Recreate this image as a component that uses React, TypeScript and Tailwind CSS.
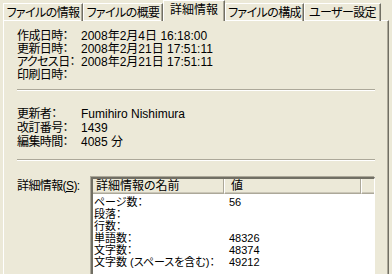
import React from 'react';

const tabs = [
  { label: 'ファイルの情報', w: 'w-[80px]' },
  { label: 'ファイルの概要', w: 'w-[80px]' },
  { label: '詳細情報', w: 'w-[62px]', active: true },
  { label: 'ファイルの構成', w: 'w-[79px]' },
  { label: 'ユーザー設定', w: 'w-[77px]' },
];

const dates = [
  ['作成日時：', '2008年2月4日 16:18:00'],
  ['更新日時：', '2008年2月21日 17:51:11'],
  ['アクセス日：', '2008年2月21日 17:51:11'],
  ['印刷日時：', ''],
];

const stats = [
  ['更新者：', 'Fumihiro Nishimura'],
  ['改訂番号：', '1439'],
  ['編集時間：', '4085 分'],
];

const details = [
  ['ページ数：', '56'],
  ['段落：', ''],
  ['行数：', ''],
  ['単語数：', '48326'],
  ['文字数：', '48374'],
  ['文字数 (スペースを含む)：', '49212'],
];

const Separator = () => (
  <div className="mx-[13px] h-[2px] border-t border-t-[#aca899] border-b border-b-white" />
);

const App = () => {
  return (
    <div className="w-[392px] h-[274px] overflow-hidden bg-[#ece9d8] text-black text-[12px] leading-[13px] font-['Liberation_Sans','Noto_Sans_CJK_JP',sans-serif] [font-feature-settings:'palt']">
      {/* tab strip */}
      <div className="flex items-end h-[21px] pl-[3px]">
        {tabs.map((t) =>
          t.active ? (
            <div
              key={t.label}
              className={`${t.w} relative z-10 h-[21px] flex items-center justify-center whitespace-nowrap bg-[#ece9d8] border-t border-l border-white border-r border-r-[#716f64] shadow-[inset_-1px_0_0_#aca899] pb-[2px]`}
            >
              {t.label}
            </div>
          ) : (
            <div
              key={t.label}
              className={`${t.w} h-[18px] flex items-center justify-center whitespace-nowrap tracking-[-0.6px] border-t border-l border-white border-r border-r-[#716f64] shadow-[inset_-1px_0_0_#aca899] pt-[1px]`}
            >
              {t.label}
            </div>
          )
        )}
      </div>

      {/* panel */}
      <div className="-mt-[1px] ml-[3px] w-[386px] h-[260px] border-t border-l border-white border-r border-r-[#716f64] shadow-[inset_-1px_0_0_#aca899] pt-[9px]">
        <div className="grid grid-cols-[64px_1fr] pl-[13px]">
          {dates.map(([k, v]) => (
            <React.Fragment key={k}>
              <div className="whitespace-nowrap tracking-[-0.6px]">{k}</div>
              <div className="whitespace-nowrap">{v}</div>
            </React.Fragment>
          ))}
        </div>

        <div className="mt-[7px]">
          <Separator />
        </div>

        <div className="grid grid-cols-[64px_1fr] pl-[13px] mt-[17px] gap-y-[1px]">
          {stats.map(([k, v]) => (
            <React.Fragment key={k}>
              <div className="whitespace-nowrap tracking-[-0.6px]">{k}</div>
              <div className="whitespace-nowrap">{v}</div>
            </React.Fragment>
          ))}
        </div>

        <div className="mt-[10px]">
          <Separator />
        </div>

        <div className="flex mt-[16px] pl-[13px]">
          <div className="w-[74px] pt-[3px] whitespace-nowrap tracking-[-0.6px]">
            詳細情報(<span className="underline">S</span>):
          </div>
          <div className="w-[284px] h-[120px] bg-white border-t-2 border-l-2 border-t-[#716f64] border-l-[#716f64] border-r border-b border-white shadow-[-1px_-1px_0_#aca899]">
            <div className="flex h-[15px] bg-[#ece9d8]">
              <div className="w-[131px] pl-[3px] flex items-center whitespace-nowrap border-r border-r-[#aca899] border-b border-b-[#aca899] shadow-[inset_0_-1px_0_#cbc7b8]">
                詳細情報の名前
              </div>
              <div className="w-[137px] pl-[6px] flex items-center border-l border-l-white border-r border-r-[#aca899] border-b border-b-[#aca899] shadow-[inset_0_-1px_0_#cbc7b8]">
                値
              </div>
              <div className="flex-1 border-l border-l-white border-b border-b-[#aca899] shadow-[inset_0_-1px_0_#cbc7b8]" />
            </div>
            <div className="pt-[2px] text-[11px] leading-[12px]">
              {details.map(([k, v]) => (
                <div key={k} className="flex h-[12px]">
                  <div className="w-[136px] pl-[1px] whitespace-nowrap">{k}</div>
                  <div className="whitespace-nowrap">{v}</div>
                </div>
              ))}
            </div>
          </div>
        </div>
      </div>
    </div>
  );
};

export default App;
